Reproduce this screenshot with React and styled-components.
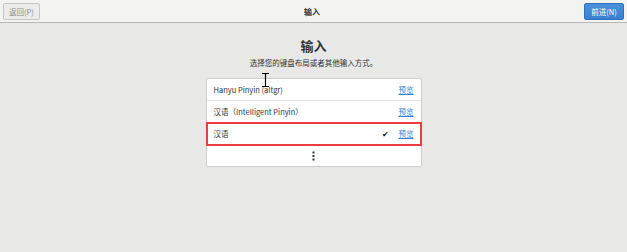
import styled, { createGlobalStyle } from "styled-components";

const Global = createGlobalStyle`
    html, body {
        margin: 0;
        padding: 0;
        background: #e8e8e7;
        font-family: "Noto Sans CJK SC", "Noto Sans", sans-serif;
        color: #2e3436;
    }
`;

const Page = styled.div`
    width: 627px;
    height: 252px;
    position: relative;
    display: flex;
    flex-direction: column;
    background: #e8e8e7;
    overflow: hidden;
`;

const Header = styled.div`
    height: 22px;
    display: flex;
    align-items: center;
    justify-content: space-between;
    padding: 0 3px 0 3px;
    background: #f3f3f2;
    border-bottom: 1px solid #b8b8b6;
    box-sizing: content-box;
`;

const HeaderTitle = styled.div`
    font-size: 8px;
    font-weight: bold;
    color: #2e3436;
`;

const Button = styled.div`
    width: ${(p) => p.$w}px;
    height: 17px;
    margin-top: 1px;
    box-sizing: border-box;
    display: flex;
    align-items: center;
    justify-content: center;
    font-size: 7.5px;
    border-radius: 2px;
    border: 1px solid ${(p) => (p.$primary ? "#2a6fc4" : "#c6c6c4")};
    background: ${(p) => (p.$primary ? "linear-gradient(#4a90d9, #3a80cf)" : "#ececeb")};
    color: ${(p) => (p.$primary ? "#ffffff" : "#8a8c8c")};
`;

const Main = styled.div`
    display: flex;
    flex-direction: column;
    align-items: center;
    padding-top: 14px;
`;

const Heading = styled.div`
    font-size: 13px;
    font-weight: bold;
    line-height: 18px;
    color: #2e3436;
`;

const Sub = styled.div`
    font-size: 7.5px;
    line-height: 10px;
    margin-top: 3px;
    color: #2e3436;
`;

const List = styled.div`
    width: 214px;
    margin-top: 10px;
    background: #ffffff;
    border: 1px solid #cfd0ce;
    border-radius: 2px;
    display: flex;
    flex-direction: column;
`;

const Row = styled.div`
    height: 22px;
    box-sizing: border-box;
    display: flex;
    align-items: center;
    padding: 0 7px 0 7px;
    font-size: 7.5px;
    color: #2e3436;
    border-bottom: 1px solid #e4e4e2;
    outline: ${(p) => (p.$marked ? "2px solid #ee3b3f" : "none")};
    outline-offset: -1px;
    position: relative;
    z-index: ${(p) => (p.$marked ? 1 : 0)};
`;

const Label = styled.div`
    flex: 1;
`;

const Check = styled.div`
    font-size: 8px;
    margin-right: 10px;
    color: #111;
`;

const Preview = styled.a`
    color: #3a7fd6;
    text-decoration: underline;
    font-size: 7.5px;
`;

const More = styled.div`
    height: 21px;
    display: flex;
    align-items: center;
    justify-content: center;
`;

const Cursor = styled.svg`
    position: absolute;
    left: 261px;
    top: 72px;
`;

const rows = [
    { label: "Hanyu Pinyin (altgr)" },
    { label: "汉语（Intelligent Pinyin）" },
    { label: "汉语", checked: true },
];

export default function App() {
    return (
        <Page>
            <Global />
            <Header>
                <Button $w={37}>返回(P)</Button>
                <HeaderTitle>输入</HeaderTitle>
                <Button $w={40} $primary>前进(N)</Button>
            </Header>
            <Main>
                <Heading>输入</Heading>
                <Sub>选择您的键盘布局或者其他输入方式。</Sub>
                <List>
                    {rows.map((r) => (
                        <Row key={r.label} $marked={r.checked}>
                            <Label>{r.label}</Label>
                            {r.checked && <Check>✔</Check>}
                            <Preview>预览</Preview>
                        </Row>
                    ))}
                    <More>
                        <svg width="3" height="10" viewBox="0 0 3 10">
                            <rect x="0.5" y="0.5" width="2" height="2" fill="#2e3436" />
                            <rect x="0.5" y="4" width="2" height="2" fill="#2e3436" />
                            <rect x="0.5" y="7.5" width="2" height="2" fill="#2e3436" />
                        </svg>
                    </More>
                </List>
            </Main>
            <Cursor width="9" height="16" viewBox="0 0 9 16">
                <path d="M1 1.5h7M4.5 1.5v13M1 14.5h7" stroke="#000" strokeWidth="1.2" fill="none" />
            </Cursor>
        </Page>
    );
}
